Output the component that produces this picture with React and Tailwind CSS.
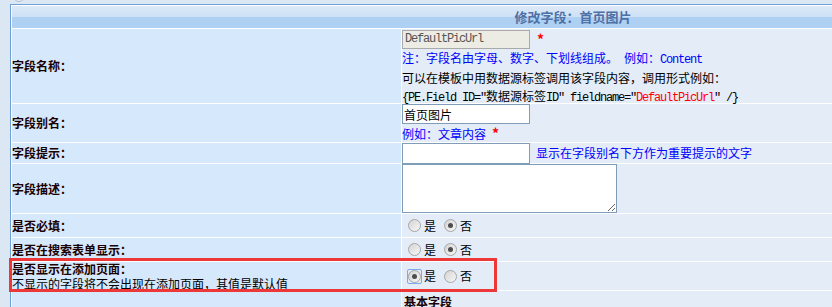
import React from 'react';

const M = ({ children, className = '' }) => (
  <span className={`font-['Liberation_Mono',monospace] tracking-[-1.2px] ${className}`}>{children}</span>
);

const Radio = ({ checked, focus }) => {
  const dot = (
    <span className="w-[13px] h-[13px] rounded-full border border-[#a6a6a6] bg-gradient-to-br from-[#d4d4d4] to-[#f7f7f7] flex items-center justify-center">
      {checked && <span className="w-[5px] h-[5px] rounded-full bg-[#4d4d4d]" />}
    </span>
  );
  if (focus) {
    return (
      <span className="w-[15px] h-[15px] -mx-px rounded-[2px] border border-[#7ea9ea] flex items-center justify-center">
        {dot}
      </span>
    );
  }
  return dot;
};

const YesNo = ({ yes, focus }) => (
  <div className="h-full flex items-center pl-[6px] text-[12px] text-black">
    <Radio checked={yes} focus={focus} />
    <span className="ml-[3px]">是</span>
    <span className="ml-[8px]"><Radio checked={!yes} /></span>
    <span className="ml-[3px]">否</span>
  </div>
);

const Label = ({ children }) => (
  <div className="h-full flex items-center text-[12px] font-bold text-[#1a0000]">{children}</div>
);

export default function App() {
  return (
    <div className="relative w-[832px] h-[307px] overflow-hidden bg-[#dce7f4] font-['Noto_Sans_CJK_SC',sans-serif] leading-[18px]">
      <div className="absolute left-[13px] top-[-10px] w-[12px] h-[12px] rounded-full border border-[#b4bfca] bg-[#e9eef4]" />

      <div className="mt-[4px] ml-[10px] w-[1140px] border-l border-t border-[#6f9fd8]">
        <div className="border-l border-t border-white">
          <div className="grid grid-cols-[389px_1fr] grid-rows-[22px_74px_38px_20px_49px_23px_23px_28px_40px] gap-px bg-white">
            <div className="col-span-2 flex flex-col">
              <div className="h-[11px] bg-gradient-to-b from-[#dde9f8] to-[#cde0f5]" />
              <div className="flex-1 bg-[#aed0f2]" />
              <div className="absolute left-[12px] top-[6px] w-[1122px] h-[22px] flex items-center justify-center text-[13px] font-bold text-[#4f70a6]">
                修改字段：首页图片
              </div>
            </div>

            <div className="bg-[#d5e8fc]"><Label>字段名称：</Label></div>
            <div className="bg-[#e3ecf7] text-[12px]">
              <div className="flex items-center h-[20px]">
                <input
                  readOnly
                  value="DefaultPicUrl"
                  className="w-[128px] h-[19px] border border-[#a9a9a9] bg-[#ecebe4] pl-[2px] text-[12px] text-[#555] font-['Liberation_Mono',monospace] tracking-[-1.2px] outline-none"
                />
                <span className="ml-[7px] text-[14px] font-bold text-[#ff0000]">*</span>
              </div>
              <div className="text-[#0000ff]">注：字段名由字母、数字、下划线组成。<M> </M>例如：<M>Content</M></div>
              <div className="text-black">可以在模板中用数据源标签调用该字段内容，调用形式例如：</div>
              <div className="text-black">
                <M>{'{PE.Field ID="'}</M>数据源标签<M>ID" fieldname="</M>
                <M className="text-[#ff0000]">DefaultPicUrl</M>
                <M>{'" /}'}</M>
              </div>
            </div>

            <div className="bg-[#d5e8fc]"><Label>字段别名：</Label></div>
            <div className="bg-[#e3ecf7] text-[12px]">
              <input
                readOnly
                value="首页图片"
                className="block w-[128px] h-[20px] border border-[#7f9db9] bg-white px-[1px] text-[12px] text-black outline-none"
              />
              <div className="text-[#0000ff]">例如：文章内容<M> </M><span className="text-[14px] font-bold text-[#ff0000]">*</span></div>
            </div>

            <div className="bg-[#d5e8fc]"><Label>字段提示：</Label></div>
            <div className="bg-[#e3ecf7] text-[12px] flex items-start">
              <input readOnly className="w-[128px] h-[21px] border border-[#7f9db9] bg-white outline-none" />
              <span className="ml-[6px] leading-[20px] text-[#0000ff]">显示在字段别名下方作为重要提示的文字</span>
            </div>

            <div className="bg-[#d5e8fc]"><Label>字段描述：</Label></div>
            <div className="bg-[#e3ecf7]">
              <textarea readOnly className="block w-[215px] h-[49px] border border-[#7f9db9] bg-white outline-none" />
            </div>

            <div className="bg-[#d5e8fc]"><Label>是否必填：</Label></div>
            <div className="bg-[#e3ecf7]"><YesNo yes={false} /></div>

            <div className="bg-[#d5e8fc]"><Label>是否在搜索表单显示：</Label></div>
            <div className="bg-[#e3ecf7]"><YesNo yes={false} /></div>

            <div className="bg-[#d5e8fc] flex flex-col justify-center text-[12px] leading-[15px] text-[#1a0000]">
              <div className="font-bold">是否显示在添加页面：</div>
              <div className="text-black">不显示的字段将不会出现在添加页面，其值是默认值</div>
            </div>
            <div className="bg-[#e3ecf7]"><YesNo yes focus /></div>

            <div className="bg-[#d5e8fc]" />
            <div className="bg-[#e3ecf7] pl-[2px] pt-[2px] text-[12px] font-bold text-[#1a0000]">基本字段</div>
          </div>
        </div>
      </div>

      <div className="absolute left-[9px] top-[258px] w-[488px] h-[34px] border-[3px] border-[#ee3838]" />
    </div>
  );
}
